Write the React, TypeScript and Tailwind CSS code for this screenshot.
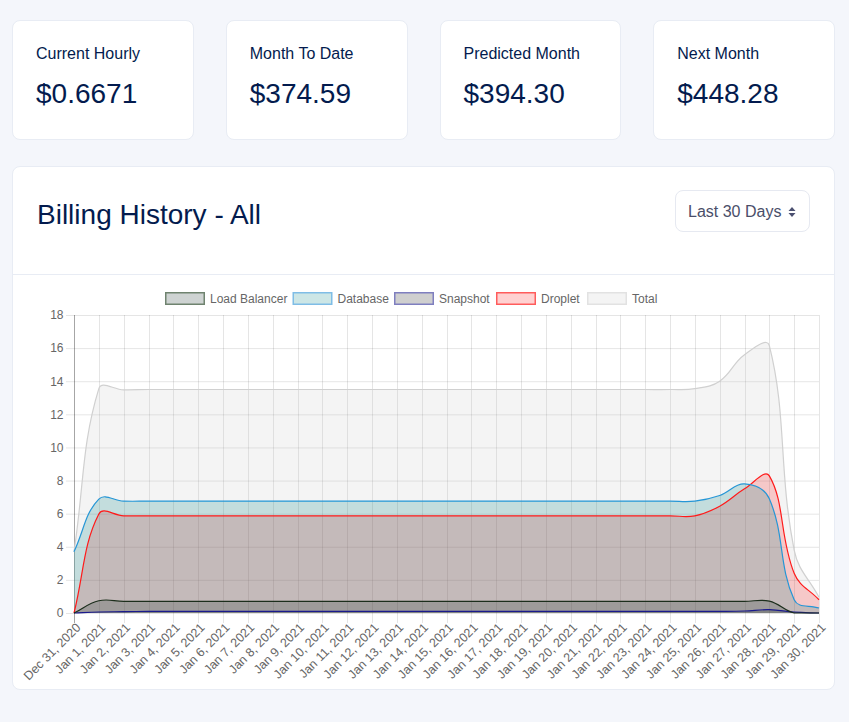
import React from 'react';

const FONT = "'Liberation Sans', Arial, Helvetica, sans-serif";

const SUMMARY = [
  { label: 'Current Hourly', value: '$0.6671' },
  { label: 'Month To Date', value: '$374.59' },
  { label: 'Predicted Month', value: '$394.30' },
  { label: 'Next Month', value: '$448.28' },
];

// chart area in page pixels (svg viewBox is offset to match)
const LEFT = 74;
const RIGHT = 819;
const TOP = 315;
const BOTTOM = 613;
const MAX = 18;
const COUNT = 31;

const xAt = (i: number) => LEFT + (i * (RIGHT - LEFT)) / (COUNT - 1);
const yAt = (v: number) => BOTTOM - (v * (BOTTOM - TOP)) / MAX;

const flat = (start: number[], mid: number, end: number[]) => [
  ...start,
  ...Array(COUNT - start.length - end.length).fill(mid),
  ...end,
];

const DATES = Array.from({ length: COUNT }, (_, i) => (i === 0 ? 'Dec 31, 2020' : `Jan ${i}, 2021`));

type Series = {
  name: string;
  data: number[];
  fill: string;
  line: string;
  legendBorder: string;
};

const SERIES: Series[] = [
  {
    name: 'Load Balancer',
    data: flat([0, 0.74, 0.7], 0.7, [0.7, 0.72, 0, 0]),
    fill: 'rgba(12,36,28,0.2)',
    line: '#1c2e1c',
    legendBorder: '#6f836f',
  },
  {
    name: 'Database',
    data: flat([3.7, 6.88, 6.76], 6.76, [6.76, 7.1, 7.8, 6.9, 0.8, 0.3]),
    fill: 'rgba(0,128,128,0.2)',
    line: '#2596d6',
    legendBorder: '#7fbde6',
  },
  {
    name: 'Snapshot',
    data: flat([0, 0.06, 0.08], 0.1, [0.12, 0.2, 0.05, 0]),
    fill: 'rgba(0,0,0,0.19)',
    line: '#1a1a8c',
    legendBorder: '#7f7fbf',
  },
  {
    name: 'Droplet',
    data: flat([0, 5.98, 5.87], 5.87, [5.87, 6.45, 7.5, 8.28, 2.4, 0.8]),
    fill: 'rgba(255,0,0,0.18)',
    line: '#ff1a1a',
    legendBorder: '#ff5c5c',
  },
  {
    name: 'Total',
    data: flat([3.7, 13.55, 13.48], 13.5, [13.5, 13.55, 14.0, 15.6, 16.15, 3.8, 0.95]),
    fill: 'rgba(200,200,200,0.2)',
    line: '#d0d0d0',
    legendBorder: '#e2e2e2',
  },
];

const LEGEND_X = [165, 292.5, 394, 496, 587];

const cap = (v: number, lo: number, hi: number) => Math.max(lo, Math.min(hi, v));

// same spline as chart.js v2 (tension 0.4)
const splinePath = (values: number[]) => {
  const pts = values.map((v, i) => ({ x: xAt(i), y: yAt(v) }));
  const cps = pts.map((cur, i) => {
    const prev = pts[i - 1] || cur;
    const next = pts[i + 1] || cur;
    const d01 = Math.hypot(cur.x - prev.x, cur.y - prev.y);
    const d12 = Math.hypot(next.x - cur.x, next.y - cur.y);
    const s01 = d01 + d12 ? d01 / (d01 + d12) : 0;
    const s12 = d01 + d12 ? d12 / (d01 + d12) : 0;
    const fa = 0.4 * s01;
    const fb = 0.4 * s12;
    return {
      px: cap(cur.x - fa * (next.x - prev.x), LEFT, RIGHT),
      py: cap(cur.y - fa * (next.y - prev.y), TOP, BOTTOM),
      nx: cap(cur.x + fb * (next.x - prev.x), LEFT, RIGHT),
      ny: cap(cur.y + fb * (next.y - prev.y), TOP, BOTTOM),
    };
  });
  let d = `M${pts[0].x},${pts[0].y}`;
  for (let i = 1; i < pts.length; i++) {
    d += ` C${cps[i - 1].nx},${cps[i - 1].ny} ${cps[i].px},${cps[i].py} ${pts[i].x},${pts[i].y}`;
  }
  return d;
};

const BillingChart = () => {
  const drawOrder = [...SERIES].reverse();
  const yTicks = Array.from({ length: 10 }, (_, i) => i * 2);

  return (
    <svg width={821} height={414} viewBox="13 275 821 414" className="block" style={{ fontFamily: FONT }}>
      {/* legend */}
      {SERIES.map((s, i) => (
        <g key={s.name}>
          <rect
            x={LEGEND_X[i] + 0.75}
            y={292.75}
            width={38.5}
            height={11.5}
            fill={s.fill}
            stroke={s.legendBorder}
            strokeWidth={1.5}
          />
          <text x={LEGEND_X[i] + 45} y={302.8} fontSize={12} fill="#666">
            {s.name}
          </text>
        </g>
      ))}

      {/* grid */}
      {yTicks.map((v) => (
        <g key={v}>
          <line x1={66} x2={RIGHT} y1={yAt(v) + 0.5} y2={yAt(v) + 0.5} stroke="rgba(0,0,0,0.1)" />
          <text x={63.5} y={yAt(v) + 4.3} fontSize={12} fill="#666" textAnchor="end">
            {v}
          </text>
        </g>
      ))}
      {DATES.map((d, i) => {
        const ax = xAt(i) + 5;
        const ay = 626;
        return (
          <g key={d}>
            <line
              x1={Math.round(xAt(i)) + 0.5}
              x2={Math.round(xAt(i)) + 0.5}
              y1={TOP}
              y2={BOTTOM + 10}
              stroke={i === 0 ? 'rgba(0,0,0,0.35)' : 'rgba(0,0,0,0.1)'}
            />
            <text
              x={ax}
              y={ay}
              fontSize={12.5}
              fill="#666"
              textAnchor="end"
              dominantBaseline="middle"
              transform={`rotate(-45 ${ax} ${ay})`}
            >
              {d}
            </text>
          </g>
        );
      })}

      {/* fills first, then lines */}
      {drawOrder.map((s) => (
        <path
          key={`${s.name}-fill`}
          d={`${splinePath(s.data)} L${RIGHT},${BOTTOM} L${LEFT},${BOTTOM} Z`}
          fill={s.fill}
        />
      ))}
      {drawOrder.map((s) => (
        <path key={`${s.name}-line`} d={splinePath(s.data)} fill="none" stroke={s.line} strokeWidth={1.2} />
      ))}
    </svg>
  );
};

const SortIcon = () => (
  <svg width="8" height="12" viewBox="0 0 8 12" className="text-[#4b5070]">
    <path d="M4 1 L7.5 5 H0.5 Z" fill="currentColor" />
    <path d="M4 11 L7.5 7 H0.5 Z" fill="currentColor" />
  </svg>
);

export default function App() {
  return (
    <div
      className="min-h-screen bg-[#f4f6fb] pt-5 pl-3 pr-[14px] pb-8 text-[#031b4e]"
      style={{ fontFamily: FONT }}
    >
      {/* Summary cards */}
      <div className="grid grid-cols-4 gap-8">
        {SUMMARY.map((item) => (
          <div key={item.label} className="h-[120px] rounded-lg border border-[#e8ecf4] bg-white pl-[23px] pr-6 pt-6">
            <div className="text-base leading-[18px]">{item.label}</div>
            <div className="mt-[15px] text-[28px] leading-[32px]">{item.value}</div>
          </div>
        ))}
      </div>

      {/* Billing history */}
      <div className="mt-[26px] rounded-lg border border-[#e8ecf4] bg-white">
        <div className="flex h-[108px] items-start justify-between border-b border-[#e8ecf4] px-6 pt-[23px]">
          <h2 className="mt-[9px] text-[28px] font-normal leading-[32px]">Billing History - All</h2>
          <div className="flex h-[42px] w-[135px] items-center justify-between rounded-lg border border-[#e6e9f1] pl-3 pr-[13px] pt-[2px] text-base leading-5 text-[#4a4e69]">
            <span>Last 30 Days</span>
            <SortIcon />
          </div>
        </div>
        <BillingChart />
      </div>
    </div>
  );
}
